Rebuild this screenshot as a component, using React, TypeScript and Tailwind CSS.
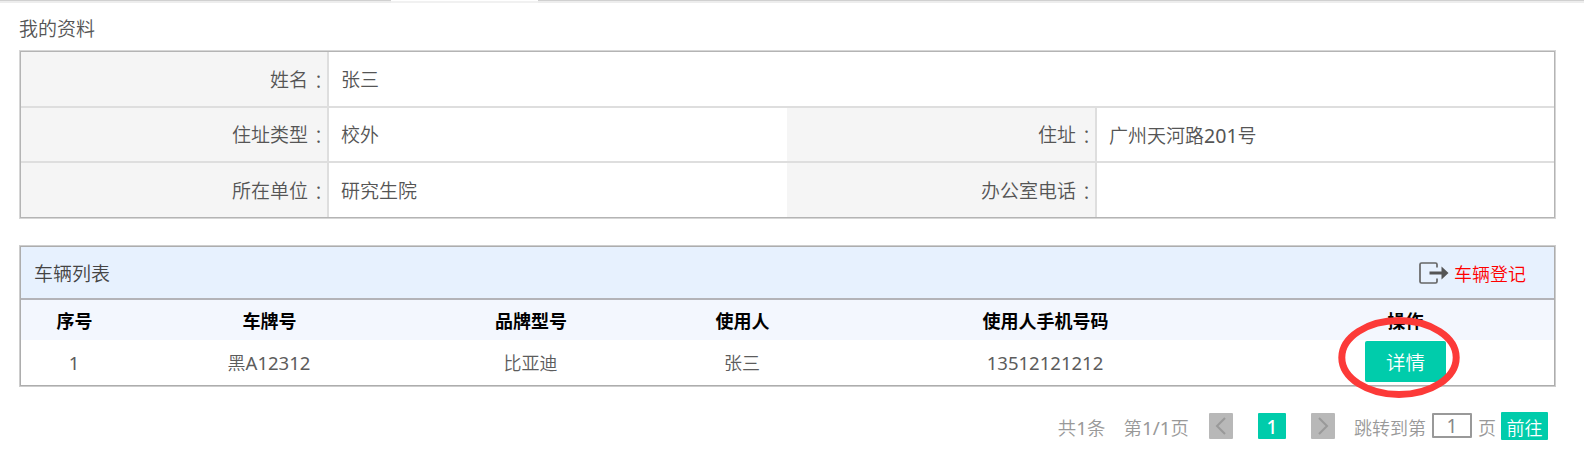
import React from 'react';

function Mixed({ text }: { text: string }) {
  return (
    <>
      {text.split(/([A-Z0-9/]+)/).map((part, i) =>
        i % 2 ? <span key={i} className="text-[1.03em] font-normal">{part}</span> : part,
      )}
    </>
  );
}

function Label({ children }: { children: string }) {
  return (
    <div className="flex items-center justify-end border-r-2 border-[#dedede] bg-[#f5f5f5] pt-[2px]">
      <span className="mr-px">{children}</span>
      <span className="-mr-px font-['Noto_Sans_CJK_TC',sans-serif] font-light">：</span>
    </div>
  );
}

function Value({ children = '' }: { children?: string }) {
  return (
    <div className="flex items-center pt-[2px] pl-3">
      <span><Mixed text={children} /></span>
    </div>
  );
}

const headings = ['序号', '车牌号', '品牌型号', '使用人', '使用人手机号码', '操作'];
const vehicle = ['1', '黑A12312', '比亚迪', '张三', '13512121212'];

function Profile() {
  return (
    <section className="h-[169px] w-[1537px] border border-[#d6d6d6] text-[19px] text-[#555]">
      <div className="grid h-full grid-rows-[54px_55px_56px] border border-[#b4b4b4]">
        <div className="grid grid-cols-[308px_1fr]">
          <Label>姓名</Label>
          <Value>张三</Value>
        </div>
        <div className="grid grid-cols-[308px_458px_310px_1fr] border-t-2 border-[#dedede]">
          <Label>住址类型</Label>
          <Value>校外</Value>
          <Label>住址</Label>
          <Value>广州天河路201号</Value>
        </div>
        <div className="grid grid-cols-[308px_458px_310px_1fr] border-t-2 border-[#dedede]">
          <Label>所在单位</Label>
          <Value>研究生院</Value>
          <Label>办公室电话</Label>
          <Value />
        </div>
      </div>
    </section>
  );
}

function Vehicles() {
  const columns = 'grid grid-cols-[107px_283px_240px_183px_423px_297px] text-center text-[18px]';
  return (
    <section className="relative mt-[26px] w-[1537px] border border-[#cdcdcd]">
      <div className="border border-[#adadad]">
        <header className="flex h-[53px] items-center justify-between border-b-2 border-[#b3b3b8] bg-[#e7f1fe] pr-7 pl-[13px]">
          <h2 className="pt-[3px] text-[19px] text-[#444]">车辆列表</h2>
          <a className="flex items-center gap-[5px] text-[18px] text-[#f00]">
            <svg className="mt-px" width="30" height="22" viewBox="0 0 30 22" fill="none">
              <path d="M18 5.5V2.5Q18 1 16.5 1H2.5Q1 1 1 2.5V19.5Q1 21 2.5 21H16.5Q18 21 18 19.5V16.5" stroke="#666" strokeWidth="1.7" />
              <path d="M10.5 9.4H22.5V4.4L29.5 11L22.5 17.6V12.4H10.5Z" fill="#555" />
            </svg>
            <span className="pt-[3px]">车辆登记</span>
          </a>
        </header>
        <div className={`${columns} h-[40px] items-center bg-[#f3f7fe] pt-[2px] font-bold text-black`}>
          {headings.map((h) => <div key={h}>{h}</div>)}
        </div>
        <div className={`${columns} h-[45px] items-center text-[#5c5c5c]`}>
          {vehicle.map((v) => <div key={v} className="pt-px pr-px"><Mixed text={v} /></div>)}
          <div className="flex justify-center">
            <button className="mt-[-2px] h-[41px] w-[81px] rounded-[2px] bg-[#00ccab] pt-[3px] text-[19.5px] text-white">详情</button>
          </div>
        </div>
      </div>
      <svg className="pointer-events-none absolute top-[70px] left-[1317px]" width="124" height="84" viewBox="0 0 124 84" fill="none">
        <ellipse cx="62" cy="41.5" rx="57.2" ry="37" stroke="#fc3a38" strokeWidth="7" />
      </svg>
    </section>
  );
}

function Pagination() {
  return (
    <nav className="mt-[25px] flex h-7 w-[1529px] items-center justify-end text-[18px] whitespace-nowrap text-[#999]">
      <span className="mr-[18px] pt-[4px] text-[18.4px]"><Mixed text="共1条" /></span>
      <span className="mr-[20px] pt-[4px] text-[18.4px]"><Mixed text="第1/1页" /></span>
      <button className="mr-[25px] flex h-[26px] w-6 items-center justify-center rounded-[1px] bg-[#b8b8b8]">
        <svg width="12" height="18" viewBox="0 0 12 18" fill="none" stroke="#999" strokeWidth="2"><path d="M10 1L2 9L10 17" /></svg>
      </button>
      <button className="mr-[25px] flex h-[26px] w-7 items-center justify-center rounded-[1px] bg-[#00ccab] pt-[3px] text-[19px] font-medium text-white">1</button>
      <button className="mr-[19px] flex h-[26px] w-6 items-center justify-center rounded-[1px] bg-[#b8b8b8]">
        <svg width="12" height="18" viewBox="0 0 12 18" fill="none" stroke="#999" strokeWidth="2"><path d="M2 1L10 9L2 17" /></svg>
      </button>
      <span className="mr-[6px] pt-[3px]">跳转到第</span>
      <span className="mr-[6px] mb-px flex h-[25px] w-10 items-center justify-center rounded-[1px] border-2 border-[#999] bg-white pt-px text-[19px] font-normal text-[#888]">1</span>
      <span className="mr-[5px] pt-[3px]">页</span>
      <button className="h-7 w-[47px] rounded-[1px] bg-[#00ccab] pt-[3px] text-white">前往</button>
    </nav>
  );
}

export default function App() {
  return (
    <main className="h-[476px] w-[1584px] overflow-hidden bg-white font-['Noto_Sans','Noto_Sans_CJK_SC',sans-serif] leading-none font-[350]">
      <div className="flex h-[3px]">
        <div className="w-[391px] border-t border-b-2 border-t-[#d0d0d0] border-b-[#ededed]" />
        <div className="w-[147px] border-b-2 border-b-[#f1f1f1]" />
        <div className="flex-1 border-t border-b-2 border-t-[#d0d0d0] border-b-[#ededed]" />
      </div>
      <div className="pl-[19px]">
        <h1 className="flex h-[47px] items-center pt-[6px] text-[19px] text-[#555]">我的资料</h1>
        <Profile />
        <Vehicles />
        <Pagination />
      </div>
    </main>
  );
}
